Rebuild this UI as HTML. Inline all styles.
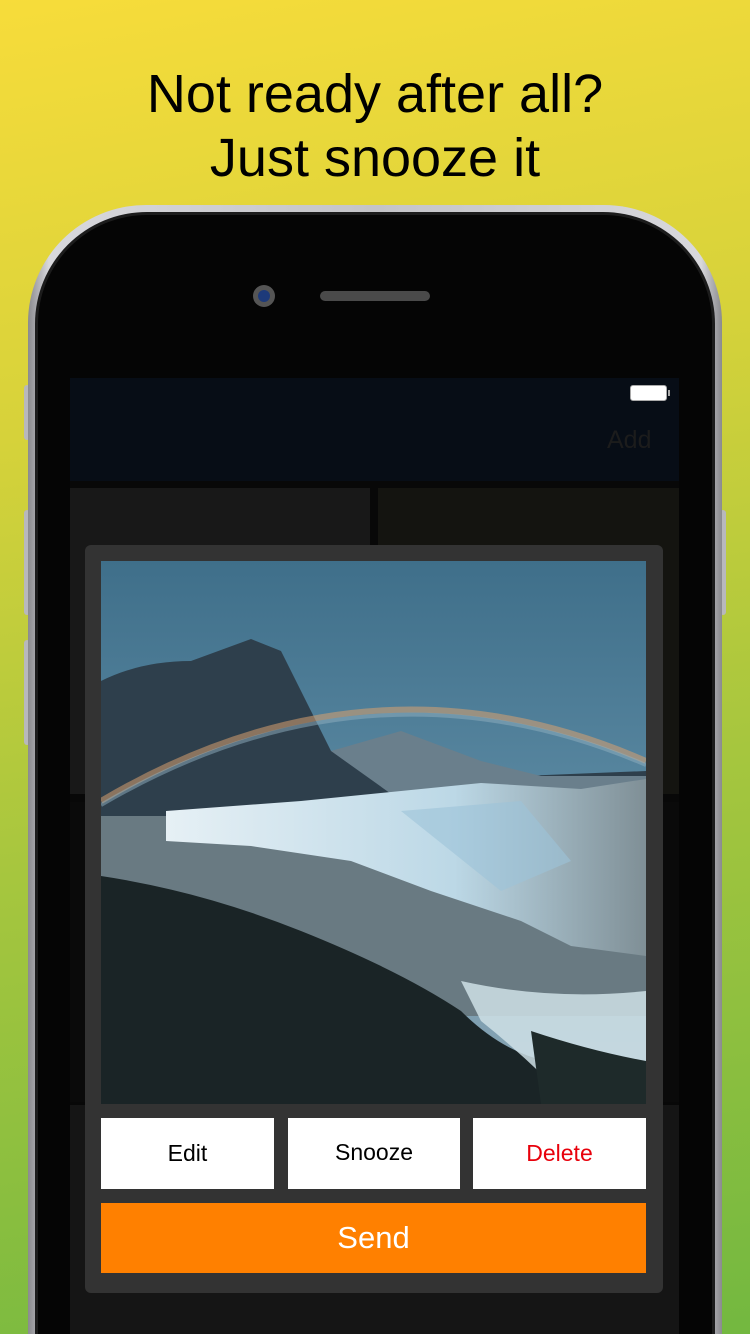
<!DOCTYPE html>
<html><head><meta charset="utf-8"><style>
*{margin:0;padding:0;box-sizing:border-box}
html,body{width:750px;height:1334px;overflow:hidden}
body{position:relative;font-family:"Liberation Sans",sans-serif;
background:linear-gradient(170deg,#f7dc3a 0%,#d6d23a 30%,#a6c63e 60%,#73b840 100%);}
.title{position:absolute;top:62px;left:0;width:750px;text-align:center;font-size:54px;line-height:64px;color:#000}
.frame{position:absolute;left:28px;top:205px;width:694px;height:1129px;border-radius:118px 118px 0 0;background:linear-gradient(90deg,#8a8a8e,#d8d8dc 3%,#c4c4c8 50%,#d8d8dc 97%,#8a8a8e)}
.body{position:absolute;left:35px;top:212px;width:680px;height:1122px;border-radius:112px 112px 0 0;background:#050505;border:3px solid #1c1c1c;border-bottom:none}
.btn{position:absolute;width:6px;background:#b8b8bc;border-radius:3px}
.screen{position:absolute;left:70px;top:378px;width:609px;height:956px;background:#080808}
.nav{position:absolute;left:0;top:0;width:609px;height:103px;background:#070d16}
.cell{position:absolute;background:#181818}
.modal{position:absolute;left:85px;top:545px;width:578px;height:748px;background:#333;border-radius:6px}
.b{position:absolute;top:573px;height:71px;background:#fff;font-size:23px;text-align:center;line-height:71px;color:#000}
</style></head><body>
<div class="title">Not ready after all?<br>Just snooze it</div>
<div class="btn" style="left:24px;top:385px;height:55px"></div>
<div class="btn" style="left:24px;top:510px;height:105px"></div>
<div class="btn" style="left:24px;top:640px;height:105px"></div>
<div class="btn" style="left:720px;top:510px;height:105px"></div>
<div class="frame"></div>
<div class="body"></div>
<div style="position:absolute;left:253px;top:285px;width:22px;height:22px;border-radius:50%;background:#555;"></div>
<div style="position:absolute;left:258px;top:290px;width:12px;height:12px;border-radius:50%;background:#1d3a7a;"></div>
<div style="position:absolute;left:320px;top:291px;width:110px;height:10px;border-radius:5px;background:#4a4a4a;"></div>
<div class="screen">
 <div class="nav">
  <div style="position:absolute;left:560px;top:7px;width:37px;height:16px;border:1px solid #aaa;border-radius:3px;background:#fff"></div>
  <div style="position:absolute;left:598px;top:12px;width:2px;height:6px;background:#aaa"></div>
  <div style="position:absolute;left:537px;top:48px;font-size:25px;color:#1c1c1c">Add</div>
 </div>
 <div class="cell" style="left:0;top:110px;width:300px;height:306px"></div>
 <div class="cell" style="left:308px;top:110px;width:301px;height:306px;background:#141410"></div>
 <div class="cell" style="left:0;top:424px;width:609px;height:300px;background:#0a0a0a"></div>
 <div class="cell" style="left:0;top:727px;width:609px;height:229px;background:#151515"></div>
</div>
<div class="modal">
 <svg style="position:absolute;left:16px;top:16px" width="545" height="543" viewBox="0 0 545 543">
  <defs>
   <linearGradient id="sky" x1="0" y1="0" x2="0" y2="1"><stop offset="0" stop-color="#3f6f8a"/><stop offset=".5" stop-color="#5c8aa3"/><stop offset="1" stop-color="#8fa9b7"/></linearGradient>
   <linearGradient id="ice" x1="0" y1="0" x2="1" y2="0"><stop offset="0" stop-color="#e6f0f5"/><stop offset=".6" stop-color="#bcd8e6"/><stop offset="1" stop-color="#7f8f96"/></linearGradient>
  </defs>
  <rect width="545" height="543" fill="url(#sky)"/>
  <path d="M0 120 Q40 100 90 100 L150 78 L180 90 L230 190 L330 200 L420 215 L545 210 L545 260 L0 260Z" fill="#2e3f4c"/>
  <path d="M230 190 L300 170 L380 200 L440 215 L545 215 L545 240 L300 240Z" fill="#6a7f8c"/>
  <path d="M0 240 Q270 80 545 200" stroke="#d9a070" stroke-width="6" fill="none" opacity=".55"/>
  <path d="M0 244 Q270 86 545 204" stroke="#8fb0c0" stroke-width="4" fill="none" opacity=".5"/>
  <rect x="0" y="255" width="545" height="200" fill="#697a82"/>
  <path d="M65 250 L200 240 L380 222 L480 228 L545 218 L545 395 L470 385 L420 360 L330 330 L250 300 L150 285 L65 280Z" fill="url(#ice)"/>
  <path d="M300 250 L420 240 L470 300 L400 330Z" fill="#9cc3d8" opacity=".6"/>
  <path d="M0 315 Q100 330 200 370 Q300 410 360 450 Q400 490 445 500 L470 543 L0 543Z" fill="#1a2426"/>
  <path d="M360 420 Q450 440 545 430 L545 543 L470 543 Q430 500 380 460Z" fill="#cfe0e6" opacity=".85"/>
  <path d="M430 470 Q490 490 545 500 L545 543 L440 543Z" fill="#1e2a2a"/>
 </svg>
 <div class="b" style="left:16px;width:173px">Edit</div>
 <div class="b" style="left:203px;width:172px;line-height:68px">Snooze</div>
 <div class="b" style="left:388px;width:173px;color:#e8000b">Delete</div>
 <div style="position:absolute;left:16px;top:658px;width:545px;height:70px;background:#ff8000;color:#fff;font-size:31px;text-align:center;line-height:70px">Send</div>
</div>
</body></html>
